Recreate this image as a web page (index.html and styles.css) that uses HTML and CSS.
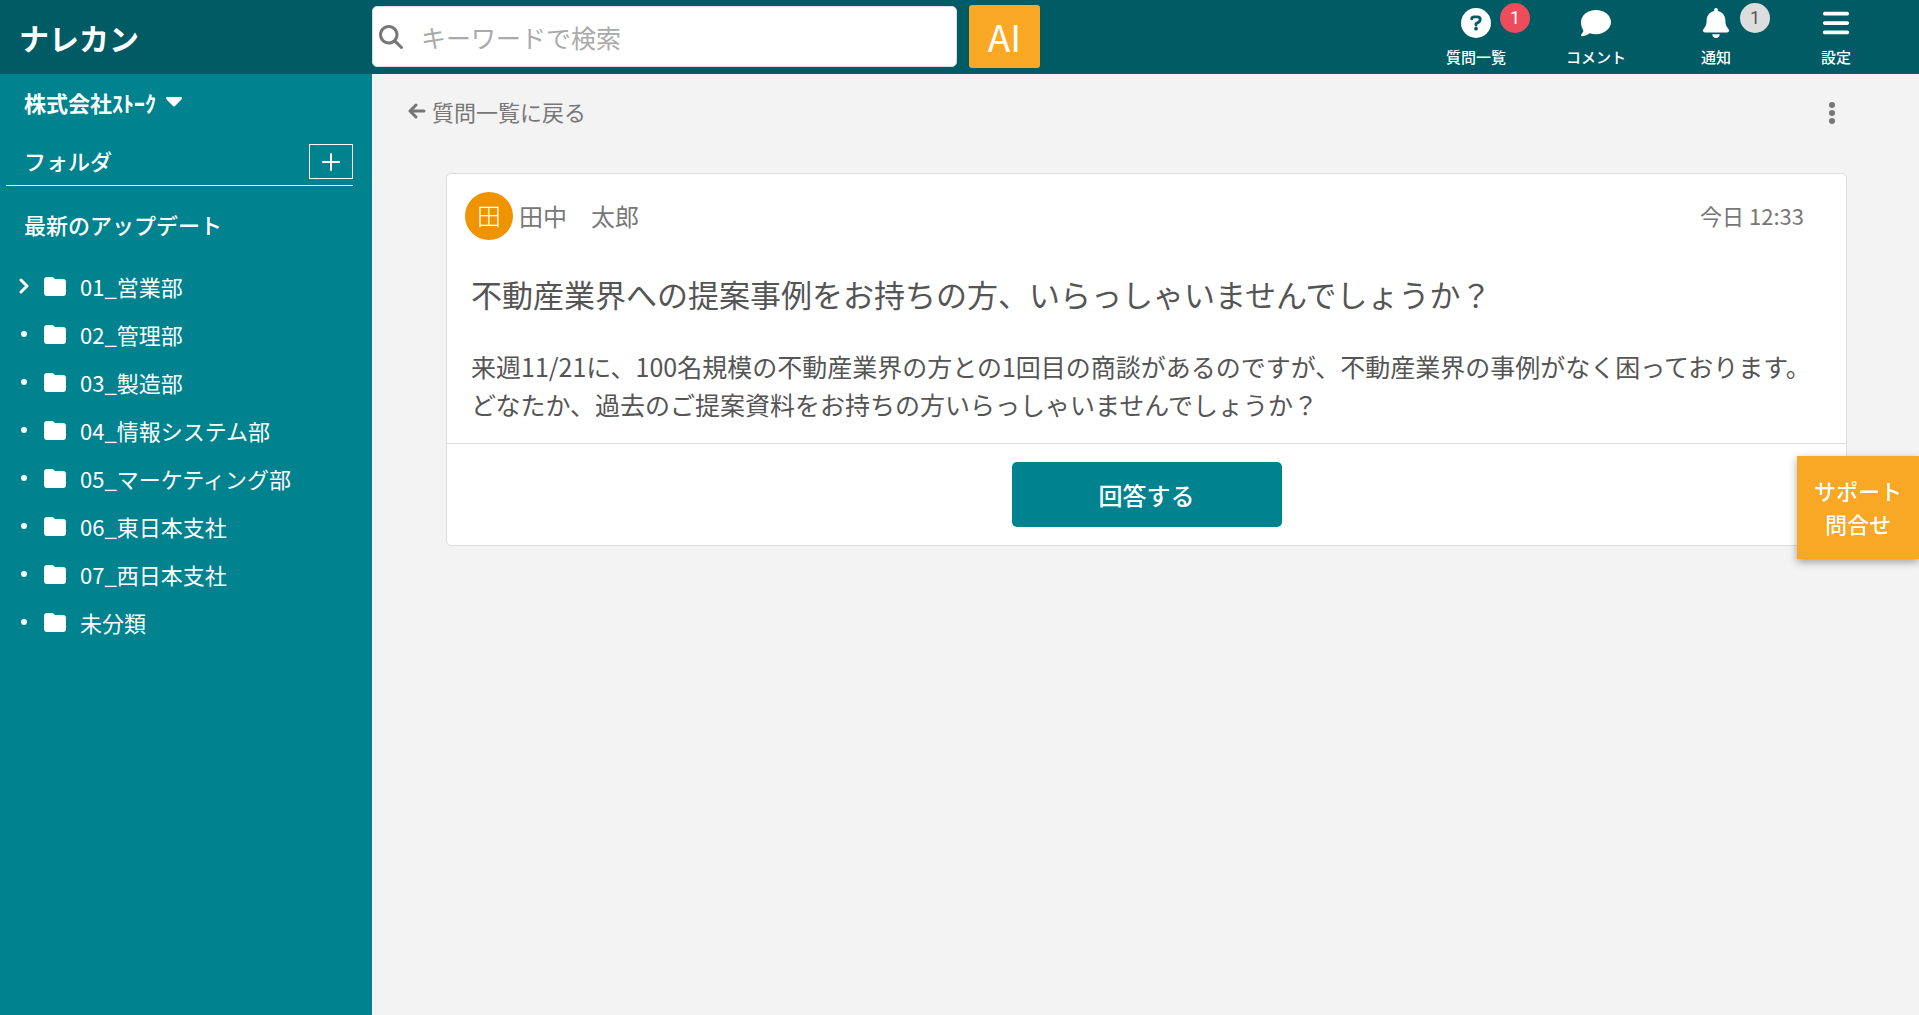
FILE: index.html
```html
<!DOCTYPE html>
<html lang="ja">
<head>
<meta charset="utf-8">
<meta name="viewport" content="width=device-width, initial-scale=1">
<title>ナレカン</title>
<link rel="stylesheet" href="styles.css">
</head>
<body>
<header class="topbar">
  <a class="brand" href="#">ナレカン</a>
  <form class="search" role="search">
    <label class="search-box">
      <svg class="search-icon" viewBox="0 0 512 512" aria-hidden="true"><path d="M416 208c0 46-15 88-40 123l126 126c13 13 13 33 0 46s-33 13-46 0L330 376c-34 25-77 40-122 40C93 416 0 323 0 208S93 0 208 0s208 93 208 208zM208 352a144 144 0 1 0 0-288 144 144 0 1 0 0 288z"/></svg>
      <input type="search" placeholder="キーワードで検索" aria-label="キーワードで検索">
    </label>
    <button class="ai" type="button">AI</button>
  </form>
  <nav class="tools">
    <a class="tool" href="#">
      <svg viewBox="0 0 512 512" aria-hidden="true"><circle cx="256" cy="256" r="256"/><path class="mark" d="M182 184c4-22 20-32 42-32h56c29 0 48 20 48 46 0 22-10 34-28 44l-44 26v24"/><circle class="mark-dot" cx="256" cy="354" r="32"/></svg>
      <span>質問一覧</span><b class="badge alert">1</b>
    </a>
    <a class="tool" href="#">
      <svg viewBox="0 0 512 512" aria-hidden="true"><path d="M512 240c0 115-115 208-256 208-37 0-72-6-104-18-12 9-31 20-54 30-24 11-53 20-82 20-6 0-12-4-15-10-2-6-1-13 3-17 1-1 9-9 20-25 8-12 15-27 17-42C15 351 0 298 0 240 0 125 115 32 256 32s256 93 256 208z"/></svg>
      <span>コメント</span>
    </a>
    <a class="tool" href="#">
      <svg viewBox="0 0 448 512" aria-hidden="true"><path d="M224 0c-18 0-32 14-32 32v19C119 66 64 131 64 208v19c0 47-17 92-48 127l-8 9c-8 9-10 23-5 34s16 19 29 19h384c13 0 24-7 29-19s3-25-5-34l-8-9c-31-35-48-80-48-127v-19c0-77-55-142-128-157V32c0-18-14-32-32-32zM288 448H160c0 17 7 33 19 45s28 19 45 19 33-7 45-19 19-28 19-45z"/></svg>
      <span>通知</span><b class="badge">1</b>
    </a>
    <a class="tool" href="#">
      <svg viewBox="0 0 448 512" aria-hidden="true"><path d="M0 96c0-18 14-32 32-32h384c18 0 32 14 32 32s-14 32-32 32H32c-18 0-32-14-32-32zm0 160c0-18 14-32 32-32h384c18 0 32 14 32 32s-14 32-32 32H32c-18 0-32-14-32-32zm0 160c0-18 14-32 32-32h384c18 0 32 14 32 32s-14 32-32 32H32c-18 0-32-14-32-32z"/></svg>
      <span>設定</span>
    </a>
  </nav>
</header>
<svg class="defs" aria-hidden="true"><symbol id="folder" viewBox="0 0 22 19"><path d="M3 0h5q1 0 2 1l1 1h8q3 0 3 3v11q0 3-3 3H3q-3 0-3-3V3q0-3 3-3z"/></symbol></svg>
<div class="layout">
  <aside class="sidebar">
    <button class="company" type="button">株式会社ｽﾄｰｸ
      <svg viewBox="0 0 16 10" aria-hidden="true"><path d="M1 0h14q1 0 1 1l-1 2-6 6q-1 1-2 0L1 3 0 1q0-1 1-1z"/></svg>
    </button>
    <div class="folder-head">
      <h2>フォルダ</h2>
      <button class="add" type="button" aria-label="フォルダを追加"><svg viewBox="0 0 18 18" aria-hidden="true"><path d="M9 1v16M1 9h16"/></svg></button>
    </div>
    <a class="updates" href="#">最新のアップデート</a>
    <ul class="folders">
      <li><a href="#"><svg class="chevron" viewBox="0 0 10 16" aria-hidden="true"><path d="M2 2l6 6-6 6"/></svg><svg class="folder"><use href="#folder"/></svg>01_営業部</a></li>
      <li><a href="#"><i class="dot"></i><svg class="folder"><use href="#folder"/></svg>02_管理部</a></li>
      <li><a href="#"><i class="dot"></i><svg class="folder"><use href="#folder"/></svg>03_製造部</a></li>
      <li><a href="#"><i class="dot"></i><svg class="folder"><use href="#folder"/></svg>04_情報システム部</a></li>
      <li><a href="#"><i class="dot"></i><svg class="folder"><use href="#folder"/></svg>05_マーケティング部</a></li>
      <li><a href="#"><i class="dot"></i><svg class="folder"><use href="#folder"/></svg>06_東日本支社</a></li>
      <li><a href="#"><i class="dot"></i><svg class="folder"><use href="#folder"/></svg>07_西日本支社</a></li>
      <li><a href="#"><i class="dot"></i><svg class="folder"><use href="#folder"/></svg>未分類</a></li>
    </ul>
  </aside>
  <main class="content">
    <div class="page-bar">
      <a class="back" href="#"><svg viewBox="0 0 18 16" aria-hidden="true"><path d="M8 2L2 8l6 6M2 8h14"/></svg>質問一覧に戻る</a>
      <button class="more" type="button" aria-label="メニュー"><svg viewBox="0 0 6 22" aria-hidden="true"><circle cx="3" cy="3" r="3"/><circle cx="3" cy="11" r="3"/><circle cx="3" cy="19" r="3"/></svg></button>
    </div>
    <article class="card">
      <div class="card-head">
        <span class="avatar">田</span>
        <span class="name">田中　太郎</span>
        <time>今日 12:33</time>
      </div>
      <h1>不動産業界への提案事例をお持ちの方、いらっしゃいませんでしょうか？</h1>
      <p>来週11/21に、100名規模の不動産業界の方との1回目の商談があるのですが、不動産業界の事例がなく困っております。<br>どなたか、過去のご提案資料をお持ちの方いらっしゃいませんでしょうか？</p>
      <div class="card-foot"><button class="answer" type="button">回答する</button></div>
    </article>
  </main>
</div>
<button class="support" type="button">サポート<br>問合せ</button>
</body>
</html>
```
FILE: styles.css
```css
* { box-sizing: border-box; }
body {
  margin: 0;
  min-height: 100vh;
  display: flex;
  flex-direction: column;
  background: #f3f3f3;
  color: #555;
  font-family: "Noto Sans CJK JP", sans-serif;
  font-size: 22px;
}
a { color: inherit; text-decoration: none; }
button { font: inherit; color: inherit; background: none; border: 0; padding: 0; cursor: pointer; }
svg { display: block; flex: none; fill: currentColor; }
h1, h2, p, ul { margin: 0; padding: 0; font-weight: 400; }
.defs { position: absolute; width: 0; height: 0; }

.topbar { display: flex; height: 74px; background: #005b64; color: #fff; }
.brand { width: 372px; padding-left: 19px; font-size: 30px; font-weight: 700; line-height: 74px; }
.search { display: flex; gap: 12px; padding-top: 5px; flex: 0 1 668px; align-items: flex-start; }
.search-box { flex: 1; display: flex; align-items: center; height: 61px; margin-top: 1px; padding-left: 6px; gap: 18px; background: #fff; border: 1px solid #ddd; border-radius: 5px; }
.search-icon { width: 24px; height: 24px; color: #777; }
.search input { flex: 1; min-width: 0; height: 100%; padding: 0; border: 0; outline: 0; background: none; font: inherit; font-size: 25px; color: #555; }
.search input::placeholder { color: #aaa; opacity: 1; }
.ai { width: 71px; height: 63px; background: #f9a825; border-radius: 3px; font-size: 37px; line-height: 63px; }
.tools { display: flex; margin-left: auto; padding-right: 23px; }
.tool { position: relative; width: 120px; padding-top: 8px; display: flex; flex-direction: column; align-items: center; font-size: 15px; font-weight: 500; line-height: 22px; gap: 8px; }
.tool svg { height: 30px; width: 30px; }
.mark { fill: none; stroke: #005b64; stroke-width: 48; stroke-linecap: round; stroke-linejoin: round; }
.mark-dot { fill: #005b64; }
.badge { position: absolute; left: 84px; top: 3px; width: 30px; height: 30px; border-radius: 50%; background: #ddd; color: #555; font-family: Roboto, sans-serif; font-size: 18px; font-weight: 400; line-height: 30px; text-align: center; }
.alert { background: #ed4c5c; color: #fff; }

.layout { flex: 1; display: flex; }
.sidebar { flex: none; width: 372px; padding: 11px 19px 24px 6px; background: #00838f; color: #fff; font-weight: 500; line-height: 34px; }
.company { display: flex; align-items: center; gap: 10px; padding-left: 18px; font-weight: 700; line-height: 34px; }
.company svg { width: 16px; height: 10px; }
.folder-head { display: flex; justify-content: space-between; align-items: flex-start; margin-top: 25px; padding: 0 0 6px 18px; border-bottom: 1px solid #fff; }
.folder-head h2 { font-size: 22px; font-weight: 500; line-height: 32px; }
.add { width: 44px; height: 35px; border: 1px solid #fff; display: grid; place-items: center; }
.add svg { width: 18px; height: 18px; }
.add path, .chevron path, .back path { fill: none; stroke: currentColor; stroke-width: 2; stroke-linecap: round; stroke-linejoin: round; }
.chevron path, .back path { stroke-width: 3; }
.updates { display: block; margin-top: 21px; padding-left: 18px; }
.folders { list-style: none; margin-top: 21px; }
.folders a { display: flex; align-items: center; height: 48px; padding-left: 13px; }
.chevron { width: 10px; height: 16px; margin-right: 15px; }
.dot { width: 6px; height: 6px; margin: 0 17px 0 2px; border-radius: 50%; background: #fff; }
.folder { width: 22px; height: 19px; margin-right: 14px; }

.content { flex: 1; min-width: 0; padding: 20px 72px 24px 36px; }
.page-bar { display: flex; justify-content: space-between; align-items: flex-start; min-height: 36px; padding-right: 12px; color: #777; line-height: 34px; }
.back { display: flex; align-items: center; gap: 6px; }
.back svg { width: 18px; height: 16px; }
.more { padding-top: 8px; }
.more svg { width: 6px; height: 22px; }
.card { margin: 43px 0 0 38px; background: #fff; border: 1px solid #ddd; border-radius: 5px; }
.card-head { display: flex; align-items: center; padding: 18px 42px 0 18px; color: #777; }
.avatar { width: 48px; height: 48px; border-radius: 50%; background: #f09300; color: #fff; font-size: 24px; font-weight: 300; line-height: 45px; text-align: center; }
.name { margin-left: 6px; padding-bottom: 2px; font-size: 24px; }
.card-head time { margin-left: auto; padding-bottom: 2px; }
.card h1 { margin: 31px 24px 0; font-size: 31px; line-height: 46px; }
.card p { margin: 30px 24px 0; font-size: 25px; line-height: 38px; }
.card-foot { margin-top: 20px; padding: 18px; border-top: 1px solid #ddd; text-align: center; }
.answer { display: block; margin: 0 auto; width: 270px; height: 65px; border-radius: 5px; background: #00838f; color: #fff; font-size: 24px; font-weight: 500; }
.support { position: fixed; right: 0; top: 456px; width: 122px; height: 103px; padding-bottom: 2px; background: #f9a825; color: #fff; font-weight: 500; line-height: 33px; box-shadow: 0 3px 8px rgba(0, 0, 0, .35); }
```
